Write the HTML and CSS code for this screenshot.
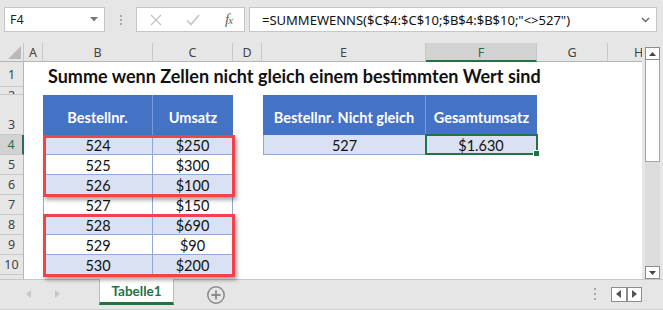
FILE: index.html
```html
<!DOCTYPE html>
<html lang="de">
<head>
<meta charset="UTF-8">
<meta name="viewport" content="width=device-width, initial-scale=1.0">
<title>Summe wenn nicht gleich</title>
<link rel="stylesheet" href="styles.css">
</head>
<body>
<div class="app">
    <div class="formula-bar">
        <div class="name-box">
            <span>F4</span>
            <svg class="caret" width="8" height="5" viewBox="0 0 8 5"><polygon points="0,0 8,0 4,4.5" fill="#7a7a7a"/></svg>
        </div>
        <div class="grip"><i></i><i></i><i></i></div>
        <div class="fx-box">
            <svg width="12" height="12" viewBox="0 0 12 12"><path d="M1 1 L11 11 M11 1 L1 11" stroke="#c4c4c4" stroke-width="1.4" fill="none"/></svg>
            <svg width="14" height="12" viewBox="0 0 14 12"><path d="M1 6.5 L5 10.5 L13 1" stroke="#c4c4c4" stroke-width="1.6" fill="none"/></svg>
            <span class="fx"><i>f</i><small>x</small></span>
        </div>
        <div class="formula">
            <span>=SUMMEWENNS($C$4:$C$10;$B$4:$B$10;"&lt;&gt;527")</span>
            <svg width="9" height="6" viewBox="0 0 9 6"><path d="M1 1 L4.5 4.5 L8 1" stroke="#666" stroke-width="1.4" fill="none"/></svg>
        </div>
    </div>

    <div class="sheet">
        <div class="grid">
            <!-- column headers -->
            <div class="corner">
                <svg width="24" height="19" viewBox="0 0 24 19"><polygon points="8,16 21,16 21,3" fill="#b9b9b9"/></svg>
            </div>
            <div class="ch col-a">A</div>
            <div class="ch col-b">B</div>
            <div class="ch col-c">C</div>
            <div class="ch col-d">D</div>
            <div class="ch col-e">E</div>
            <div class="ch col-f active">F</div>
            <div class="ch col-g">G</div>
            <div class="ch col-h cut">H</div>

            <!-- row headers -->
            <div class="rn row-1">1</div>
            <div class="rn row-2 squeezed">2</div>
            <div class="rn row-3 bottom">3</div>
            <div class="rn row-4 active">4</div>
            <div class="rn row-5">5</div>
            <div class="rn row-6">6</div>
            <div class="rn row-7">7</div>
            <div class="rn row-8">8</div>
            <div class="rn row-9">9</div>
            <div class="rn row-10">10</div>
            <div class="rn row-x"></div>

            <div class="title row-1">Summe wenn Zellen nicht gleich einem bestimmten Wert sind</div>

            <!-- table 1 -->
            <div class="th col-b row-3">Bestellnr.</div>
            <div class="th col-c row-3 last">Umsatz</div>

            <div class="cell col-b row-4 alt">524</div>
            <div class="cell col-c row-4 alt">$250</div>
            <div class="cell col-b row-5">525</div>
            <div class="cell col-c row-5">$300</div>
            <div class="cell col-b row-6 alt">526</div>
            <div class="cell col-c row-6 alt">$100</div>
            <div class="cell col-b row-7">527</div>
            <div class="cell col-c row-7">$150</div>
            <div class="cell col-b row-8 alt">528</div>
            <div class="cell col-c row-8 alt">$690</div>
            <div class="cell col-b row-9">529</div>
            <div class="cell col-c row-9">$90</div>
            <div class="cell col-b row-10 alt">530</div>
            <div class="cell col-c row-10 alt">$200</div>

            <!-- table 2 -->
            <div class="th col-e row-3 first">Bestellnr. Nicht gleich</div>
            <div class="th col-f row-3 last">Gesamtumsatz</div>
            <div class="cell col-e row-4 alt first">527</div>
            <div class="cell col-f row-4 alt">$1.630</div>

            <div class="mark mark-top"></div>
            <div class="mark mark-bottom"></div>
            <div class="selection"></div>
        </div>

        <div class="vscroll">
            <div class="sb-btn">
                <svg width="7" height="4" viewBox="0 0 7 4"><polygon points="0,4 7,4 3.5,0" fill="#444"/></svg>
            </div>
            <div class="sb-thumb"></div>
            <div class="sb-track"></div>
            <div class="sb-btn">
                <svg width="7" height="4" viewBox="0 0 7 4"><polygon points="0,0 7,0 3.5,4" fill="#444"/></svg>
            </div>
        </div>
    </div>

    <div class="tabs">
        <div class="tab-nav">
            <svg width="5" height="8" viewBox="0 0 5 8"><polygon points="5,0 5,8 0,4" fill="#c6c6c6"/></svg>
            <svg width="5" height="8" viewBox="0 0 5 8"><polygon points="0,0 0,8 5,4" fill="#c6c6c6"/></svg>
        </div>
        <div class="tab">Tabelle1</div>
        <div class="add-sheet">
            <svg width="20" height="20" viewBox="0 0 20 20">
                <circle cx="10" cy="10" r="8.2" stroke="#8a8a8a" stroke-width="1.5" fill="none"/>
                <path d="M10 5.5 V14.5 M5.5 10 H14.5" stroke="#8a8a8a" stroke-width="1.8"/>
            </svg>
        </div>
        <div class="hscroll">
            <div class="grip vertical"><i></i><i></i><i></i></div>
            <div class="hs-nav">
                <span><svg width="5" height="8" viewBox="0 0 5 8"><polygon points="5,0 5,8 0,4" fill="#555"/></svg></span>
                <span><svg width="5" height="8" viewBox="0 0 5 8"><polygon points="0,0 0,8 5,4" fill="#555"/></svg></span>
            </div>
        </div>
    </div>
</div>
</body>
</html>
```

FILE: styles.css
```css
body { margin: 0; background: #e6e6e6;
    font-family: "Noto Sans", "Open Sans", sans-serif; color: #222;
}
.app { width: 663px; height: 310px; overflow: hidden;
    border-bottom: 1px solid #d0d0d0; box-sizing: border-box;
}

/* formula bar */
.formula-bar { display: flex; align-items: flex-start;
    height: 43px; padding: 7px 0 0 4px; box-sizing: border-box;
}
.name-box, .fx-box, .formula { height: 25px; box-sizing: border-box;
    background: white; border: 1px solid #c6c6c6;
    display: flex; align-items: center;
}
.name-box { width: 101px; justify-content: space-between;
    padding: 0 6px 0 5px; font-size: 12.5px;
}
.grip { width: 31px; height: 25px; display: flex;
    flex-direction: column; align-items: center; justify-content: center; gap: 2px;
}
.grip i { width: 2px; height: 2px; background: #a8a8a8; }
.fx-box { width: 109px; display: grid;
    grid-template-columns: 37px 37px 35px; justify-items: center;
}
.fx { font-family: "Liberation Serif", serif; font-style: italic;
    color: #666; font-size: 15px; letter-spacing: -1px;
}
.fx small { font-size: 11px; }
.formula { width: 408px; margin-left: 4px; justify-content: space-between;
    padding: 0 6px 0 12px; font-size: 13px; color: #111;
}

/* sheet grid */
.sheet { display: flex; height: 236px; }
.grid { width: 642px; display: grid; background: white;
    grid-template-columns: 24px 19px 110px 80px 29px 164px 111px 71px 34px;
    grid-template-rows: 19px 25px 8px 40px repeat(7, 20px) 4px;
    font-family: Lato, "Liberation Sans", sans-serif;
}
.col-a { grid-column: 2; } .col-b { grid-column: 3; }
.col-c { grid-column: 4; } .col-d { grid-column: 5; }
.col-e { grid-column: 6; } .col-f { grid-column: 7; }
.col-g { grid-column: 8; } .col-h { grid-column: 9; }
.row-1 { grid-row: 2; } .row-2 { grid-row: 3; } .row-3 { grid-row: 4; }
.row-4 { grid-row: 5; } .row-5 { grid-row: 6; } .row-6 { grid-row: 7; }
.row-7 { grid-row: 8; } .row-8 { grid-row: 9; } .row-9 { grid-row: 10; }
.row-10 { grid-row: 11; } .row-x { grid-row: 12; }

.corner { grid-column: 1; grid-row: 1; background: #e6e6e6;
    border-right: 1px solid #c6c6c6; border-bottom: 1px solid #b5b5b5;
    box-sizing: border-box;
}
.corner svg { display: block; }
.ch, .rn { background: #e6e6e6; color: #444; box-sizing: border-box;
    font-family: "Noto Sans", "Open Sans", sans-serif; font-size: 12.5px;
    display: flex; align-items: center; justify-content: center;
}
.ch { grid-row: 1; border-right: 1px solid #c8c8c8;
    border-bottom: 1px solid #b5b5b5; padding-top: 1px;
}
.ch.active { background: #d2d2d2; color: #217346;
    border-bottom: 2px solid #217346;
}
.ch.cut { justify-content: flex-start; padding-left: 26px;
    overflow: hidden; border-right: none;
}
.rn { grid-column: 1; border-bottom: 1px solid #c8c8c8;
    border-right: 1px solid #b5b5b5;
}
.rn.squeezed { overflow: hidden; align-items: flex-start; line-height: 18px; }
.rn.bottom { align-items: flex-end; padding-bottom: 1px; }
.rn.active { background: #d2d2d2; color: #217346;
    border-right: 2px solid #217346;
}
.row-x { border-bottom: none; }

.title { grid-column: 3 / 9; font-weight: 700; font-size: 18px;
    color: #111; white-space: nowrap; padding: 3px 0 0 5px;
    display: flex; align-items: center;
}

.th, .cell { display: flex; align-items: center; justify-content: center;
    box-sizing: border-box; white-space: nowrap;
}
.th { background: #4472c4; color: white; font-weight: 700;
    font-size: 14.5px; padding-top: 4px; border-right: 1px solid #7a9ad6;
}
.th.last { border-right: none; }
.cell { font-size: 14.5px; color: #111; padding-top: 1px;
    border-right: 1px solid #8ea9db; border-bottom: 1px solid #8ea9db;
}
.cell.col-b { border-left: 1px solid #8ea9db; }
.cell.alt { background: #d9e1f2; }
.first { margin-left: 1px; }
.cell.first { border-left: 1px solid #8ea9db; }

.mark { grid-column: 3 / 5; z-index: 1; border: 3px solid #f0434a;
    margin: 0 -2px -2px 0; box-shadow: 2px 3px 4px rgba(0, 0, 0, 0.35);
}
.mark-top { grid-row: 5 / 8; }
.mark-bottom { grid-row: 9 / 12; margin-top: -1px; }

.selection { grid-column: 7; grid-row: 5; z-index: 1; position: relative;
    border: 2px solid #217346; margin: -1px -1px 0 -1px;
}
.selection::after { content: ""; position: absolute; right: -4px; bottom: -4px;
    width: 5px; height: 5px; background: #217346; border: 1px solid white;
}

/* vertical scrollbar */
.vscroll { width: 15px; margin-left: 3px; padding-top: 4px;
    display: flex; flex-direction: column; box-sizing: border-box;
}
.sb-btn { height: 13px; background: white; border: 1px solid #8c8c8c;
    box-sizing: border-box; display: flex; align-items: center; justify-content: center;
}
.sb-thumb { height: 102px; background: white; border: 1px solid #a6a6a6;
    border-top: none; box-sizing: border-box;
}
.sb-track { flex: 1; background: #dcdcdc; }

/* sheet tabs */
.tabs { height: 29px; display: flex; align-items: stretch;
    border-top: 1px solid #c6c6c6; box-sizing: border-box;
}
.tab-nav { width: 99px; display: flex; align-items: center;
    padding-left: 26px; gap: 24px; box-sizing: border-box;
}
.tab { width: 75px; margin-top: -1px; height: 26px; box-sizing: border-box;
    background: white; border-left: 1px solid #bcbcbc; border-right: 1px solid #bcbcbc;
    border-bottom: 3px solid #217346; color: #217346;
    font-family: Lato, "Liberation Sans", sans-serif; font-weight: 700; font-size: 13.5px;
    display: flex; align-items: center; justify-content: center; padding-top: 1px;
}
.add-sheet { margin-left: 32px; display: flex; align-items: center; padding-top: 1px; }
.add-sheet svg { display: block; }
.hscroll { margin-left: auto; margin-right: 21px; display: flex; align-items: center; }
.grip.vertical { width: 10px; height: 14px; gap: 3px; }
.hs-nav { margin-left: 11px; width: 31px; height: 15px; box-sizing: border-box;
    border: 1px solid #8c8c8c; background: white; display: flex;
}
.hs-nav span { flex: 1; display: flex; align-items: center; justify-content: center; }
.hs-nav span + span { border-left: 2px solid #8c8c8c; }
```
